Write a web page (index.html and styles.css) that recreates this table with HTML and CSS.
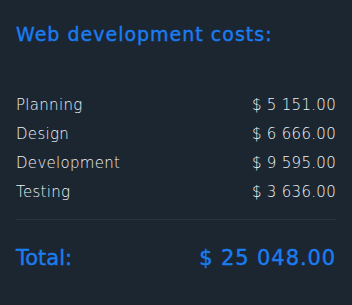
FILE: index.html
```html
<!DOCTYPE html>
<html lang="en">
<head>
<meta charset="utf-8">
<link rel="stylesheet" href="styles.css">
</head>
<body>
<div class="card">
  <h1 class="title">Web development costs:</h1>
  <ul class="items">
    <li class="row"><span>Planning</span><span>$ 5 151.00</span></li>
    <li class="row"><span>Design</span><span>$ 6 666.00</span></li>
    <li class="row"><span>Development</span><span>$ 9 595.00</span></li>
    <li class="row"><span>Testing</span><span>$ 3 636.00</span></li>
  </ul>
  <div class="total"><span class="total-label">Total:</span><span>$ 25 048.00</span></div>
</div>
</body>
</html>
```
FILE: styles.css
```css
html, body {
  margin: 0;
  padding: 0;
  background: #1b2631;
}
.card {
  width: 352px;
  height: 305px;
  box-sizing: border-box;
  padding: 22px 16px 0;
  font-family: "DejaVu Sans", sans-serif;
}
.title {
  margin: 0;
  font-size: 19px;
  line-height: 24px;
  font-weight: 400;
  color: #1b7cf0;
  letter-spacing: 1px;
  -webkit-text-stroke: 0.4px #1b7cf0;
}
.items {
  list-style: none;
  margin: 44px 0 0;
  padding: 0 0 13px;
  border-bottom: 1px solid #28323c;
}
.row {
  display: flex;
  justify-content: space-between;
  height: 29px;
  align-items: center;
  font-size: 15px;
  font-weight: 200;
  color: #eef1f4;
  letter-spacing: 0.3px;
}
.total {
  margin-top: 23px;
  display: flex;
  justify-content: space-between;
  align-items: center;
  height: 30px;
  font-size: 21px;
  font-weight: 400;
  color: #1b7cf0;
  letter-spacing: 0.9px;
  -webkit-text-stroke: 0.4px #1b7cf0;
}
.total-label {
  letter-spacing: 0;
}
```
